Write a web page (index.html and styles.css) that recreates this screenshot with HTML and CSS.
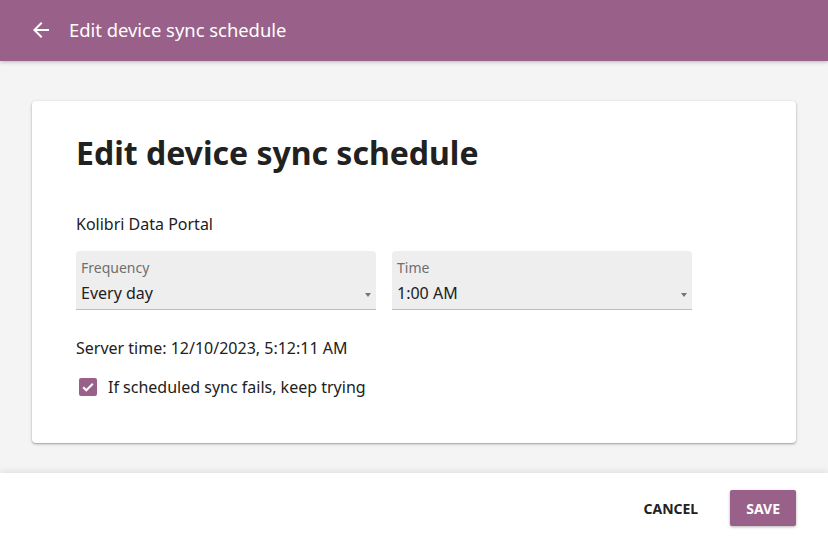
FILE: index.html
```html
<!DOCTYPE html>
<html>
<head>
<meta charset="utf-8">
<link rel="stylesheet" href="styles.css">
</head>
<body>
<div class="app">
  <header class="appbar">
    <svg class="back" width="24" height="24" viewBox="0 0 24 24"><path d="M20 11H7.83l5.59-5.59L12 4l-8 8 8 8 1.41-1.41L7.83 13H20v-2z" fill="#fff"/></svg>
    <span class="appbar-title">Edit device sync schedule</span>
  </header>
  <main class="content">
    <section class="card">
      <h1 class="title">Edit device sync schedule</h1>
      <p class="device">Kolibri Data Portal</p>
      <div class="selects">
        <div class="select">
          <span class="select-label">Frequency</span>
          <span class="select-value">Every day</span>
          <span class="arrow"></span>
        </div>
        <div class="select">
          <span class="select-label">Time</span>
          <span class="select-value">1:00 AM</span>
          <span class="arrow"></span>
        </div>
      </div>
      <p class="server-time">Server time: 12/10/2023, 5:12:11 AM</p>
      <label class="check">
        <span class="box"><svg width="14" height="14" viewBox="0 0 14 14"><path d="M2.2 7.2l3.1 3.1 6.5-6.6" fill="none" stroke="#fff" stroke-width="2"/></svg></span>
        <span>If scheduled sync fails, keep trying</span>
      </label>
    </section>
  </main>
  <footer class="footer">
    <button class="btn btn-flat">CANCEL</button>
    <button class="btn btn-raised">SAVE</button>
  </footer>
</div>
</body>
</html>
```
FILE: styles.css
```css
* { box-sizing: border-box; }
html, body { margin: 0; padding: 0; }
body {
  font-family: "Noto Sans", "Open Sans", sans-serif;
  color: #212121;
  background: #f5f5f5;
  width: 828px;
  height: 546px;
  overflow: hidden;
}
.app { display: flex; flex-direction: column; height: 546px; }
.appbar {
  height: 61px;
  flex: none;
  background: #996189;
  display: flex;
  align-items: center;
  padding-left: 29px;
  padding-bottom: 3px;
  box-shadow: 0 1px 4px rgba(0,0,0,0.25);
  position: relative;
  z-index: 2;
}
.back { margin-right: 16px; margin-top: 2px; }
.appbar-title { color: #fff; font-size: 18.4px; }
.content {
  flex: 1;
  padding: 40px 32px 0 32px;
  background: #f4f4f4;
}
.card {
  background: #fff;
  border-radius: 4px;
  box-shadow: 0 1px 3px rgba(0,0,0,0.3), 0 1px 1px rgba(0,0,0,0.1);
  height: 342px;
  padding: 28px 44px 0 44px;
}
.title {
  margin: 0;
  font-size: 32px;
  font-weight: 700;
  line-height: 48px;
}
.device { margin: 36px 0 0 0; font-size: 16px; line-height: 22px; }
.selects { display: flex; gap: 16px; margin-top: 16px; }
.select {
  position: relative;
  width: 300px;
  height: 59px;
  background: #eeeeee;
  border-radius: 4px 4px 0 0;
  border-bottom: 1px solid #bdbdbd;
  padding: 7px 5px 0 5px;
  display: flex;
  flex-direction: column;
}
.select-label { font-size: 14px; color: #6e6e6e; line-height: 20px; }
.select-value { font-size: 16px; line-height: 24px; margin-top: 3px; }
.arrow {
  position: absolute;
  right: 5px;
  top: 42px;
  width: 0; height: 0;
  border-left: 3.5px solid transparent;
  border-right: 3.5px solid transparent;
  border-top: 4px solid #757575;
}
.server-time { margin: 26px 0 0 0; font-size: 16px; line-height: 24px; }
.check { display: flex; align-items: center; margin-top: 16px; font-size: 16px; }
.box {
  width: 18px; height: 18px;
  margin-left: 3px;
  margin-right: 11px;
  background: #996189;
  border-radius: 2px;
  display: flex; align-items: center; justify-content: center;
}
.footer {
  height: 73px;
  flex: none;
  background: #fff;
  display: flex;
  align-items: flex-start;
  justify-content: flex-end;
  padding-right: 32px;
  padding-top: 17px;
  gap: 16px;
  box-shadow: 0 -2px 6px rgba(0,0,0,0.08);
  position: relative;
}
.btn {
  font-family: "Noto Sans", "Open Sans", sans-serif;
  font-size: 14px;
  font-weight: 700;
  border: none;
  height: 36px;
  padding: 0 16px;
  border-radius: 2px;
  cursor: pointer;
}
.btn-flat { background: transparent; color: #212121; }
.btn-raised {
  background: #996189;
  color: #fff;
  box-shadow: 0 1px 3px rgba(0,0,0,0.3);
}
```
